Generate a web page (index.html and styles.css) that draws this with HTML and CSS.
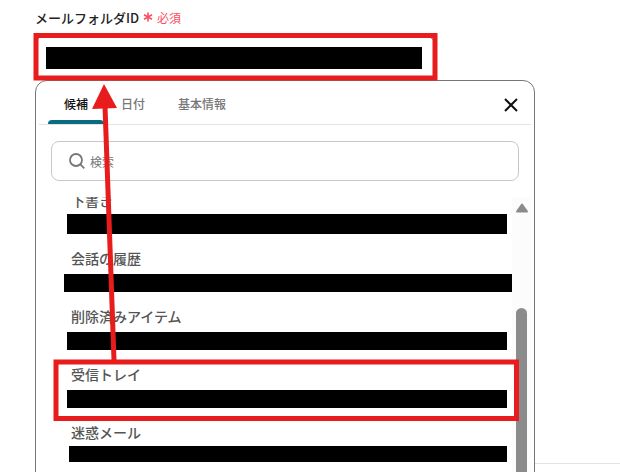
FILE: index.html
```html
<!DOCTYPE html>
<html lang="ja">
<head>
    <meta charset="UTF-8">
    <meta name="viewport" content="width=device-width, initial-scale=1.0">
    <title>メールフォルダID</title>
    <link rel="stylesheet" href="styles.css">
</head>
<body>

<section class="setting">
    <div class="label-row">
        <label for="folderId">メールフォルダID</label>
        <svg class="asterisk" viewBox="0 0 10 10" aria-hidden="true">
            <path d="M5 0.5V9.5M1 2.8L9 7.2M9 2.8L1 7.2"/>
        </svg>
        <span class="required">必須</span>
    </div>

    <div class="picker">
        <div class="field">
            <input type="text" id="folderId" class="masked" readonly>
        </div>

        <div class="panel">
            <div class="panel-head">
                <div class="tabs">
                    <button type="button" class="tab active">候補</button>
                    <button type="button" class="tab">日付</button>
                    <button type="button" class="tab">基本情報</button>
                </div>
                <button type="button" class="close" aria-label="閉じる">
                    <svg viewBox="0 0 14 14"><path d="M1 1L13 13M13 1L1 13"/></svg>
                </button>
            </div>

            <div class="search">
                <svg viewBox="0 0 16 16" aria-hidden="true">
                    <circle cx="7" cy="7" r="6"/>
                    <path d="M11.3 11.3L15.3 15.3"/>
                </svg>
                <input type="search" placeholder="検索" aria-label="検索">
            </div>

            <div class="results">
                <ul class="folders">
                    <li><span class="name">下書き</span><span class="bar near tall"></span></li>
                    <li><span class="name">会話の履歴</span><span class="bar wide"></span></li>
                    <li><span class="name">削除済みアイテム</span><span class="bar"></span></li>
                    <li><span class="name">受信トレイ</span><span class="bar"></span></li>
                    <li><span class="name">迷惑メール</span><span class="bar near narrow"></span></li>
                </ul>
                <div class="scrollbar">
                    <svg class="up" viewBox="0 0 12 10" aria-hidden="true">
                        <path d="M6 1.5L11 8.5H1Z"/>
                    </svg>
                    <div class="thumb"></div>
                </div>
            </div>
        </div>
    </div>
</section>

<!-- red frames and the arrow between them -->
<svg class="marks" width="620" height="472" aria-hidden="true">
    <rect x="36" y="35.5" width="399" height="42.5"/>
    <rect x="56" y="362" width="460.5" height="56.5"/>
    <path class="line" d="M114 360L105 106"/>
    <path class="head" d="M104 84L117 108L92 109Z"/>
</svg>

</body>
</html>
```
FILE: styles.css
```css
* {
    box-sizing: border-box;
}
body {
    margin: 0;
    height: 100vh;
    overflow: hidden;
    background: #fff;
    font-family: "Noto Sans CJK JP", sans-serif;
    font-size: 12px;
    color: #222;
}
button, input {
    font: inherit;
    border: 0;
    padding: 0;
    background: none;
    outline: none;
}
svg {
    display: block;
    fill: none;
}
.setting {
    height: calc(100vh - 8px);
    margin-left: 35px;
    padding-top: 7px;
    border-bottom: 1px solid #e2e2e2;
}
.label-row {
    display: flex;
    align-items: center;
    height: 20px;
}
.label-row label {
    font-size: 13px;
    font-weight: 500;
}
.asterisk {
    width: 10px;
    height: 10px;
    margin: 0 4px;
    stroke: #ff4d5e;
    stroke-width: 1.6;
}
.required {
    color: #ff4d5e;
}
.picker {
    position: relative;
    max-width: 500px;
    margin-top: 9px;
}
.field {
    width: 80%;
    height: 44px;
    padding: 10px 12px 10px 10px;
    border: 1px solid #777;
    border-radius: 8px;
}
.masked {
    display: block;
    width: 100%;
    height: 22px;
    background: #000;
}
.panel {
    position: absolute;
    top: 100%;
    left: 0;
    width: 100%;
    border: 1px solid #777;
    border-radius: 12px;
    background: #fff;
}
.panel-head {
    display: flex;
    justify-content: space-between;
    align-items: center;
    height: 44px;
    margin: 0 3px;
    padding: 0 13px 0 9px;
    border-bottom: 1px solid #e2e2e2;
}
.tabs {
    display: flex;
    gap: 1px;
    height: 100%;
}
.tab {
    position: relative;
    padding: 1px 16px 0;
    color: #777;
    font-weight: 500;
}
.tab.active {
    color: #111;
}
.tab.active::after {
    content: "";
    position: absolute;
    left: 0;
    right: 0;
    bottom: 0;
    height: 4px;
    border-radius: 4px 4px 0 0;
    background: #0b6b80;
}
.close {
    padding-top: 4px;
}
.close svg {
    width: 14px;
    height: 14px;
    stroke: #111;
    stroke-width: 2;
}
.search {
    display: flex;
    align-items: center;
    gap: 5px;
    height: 40px;
    margin: 16px 15px;
    padding: 0 17px;
    border: 1px solid #c8c8c8;
    border-radius: 8px;
}
.search svg {
    width: 16px;
    height: 16px;
    stroke: #777;
    stroke-width: 1.8;
}
.search input {
    flex: 1;
    min-width: 0;
}
.search input::placeholder {
    color: #777;
    opacity: 1;
}
.results {
    display: flex;
    height: 320px;
    margin-right: 3px;
    overflow: hidden;
}
/* list is scrolled a little, so the first name is cut */
.folders {
    flex: 1;
    margin: -7px 0 0;
    padding: 0;
    list-style: none;
}
.folders li {
    height: 58px;
}
.name {
    display: block;
    padding-left: 35px;
    font-size: 14px;
    font-weight: 500;
    line-height: 20px;
    color: #555;
}
.bar {
    display: block;
    height: 18px;
    margin: 6px 5px 0 31px;
    background: #000;
}
.bar.near {
    margin-top: 4px;
}
.bar.tall {
    height: 20px;
}
.bar.wide {
    margin-left: 28px;
    margin-right: 0;
}
.bar.narrow {
    height: 16px;
    margin-left: 33px;
}
.scrollbar {
    display: flex;
    flex-direction: column;
    align-items: center;
    width: 19px;
    padding-top: 6px;
    background: #fcfcfc;
}
.up {
    width: 12px;
    height: 10px;
    fill: #8b8b8b;
    stroke: #8b8b8b;
    stroke-width: 2;
    stroke-linejoin: round;
}
.thumb {
    flex: 1;
    width: 11px;
    margin-top: 95px;
    border-radius: 6px;
    background: #8b8b8b;
}
.marks {
    position: absolute;
    top: 0;
    left: 0;
    pointer-events: none;
    stroke: #e81c1c;
    stroke-width: 5;
}
.marks .head {
    fill: #e81c1c;
    stroke: none;
}
```
